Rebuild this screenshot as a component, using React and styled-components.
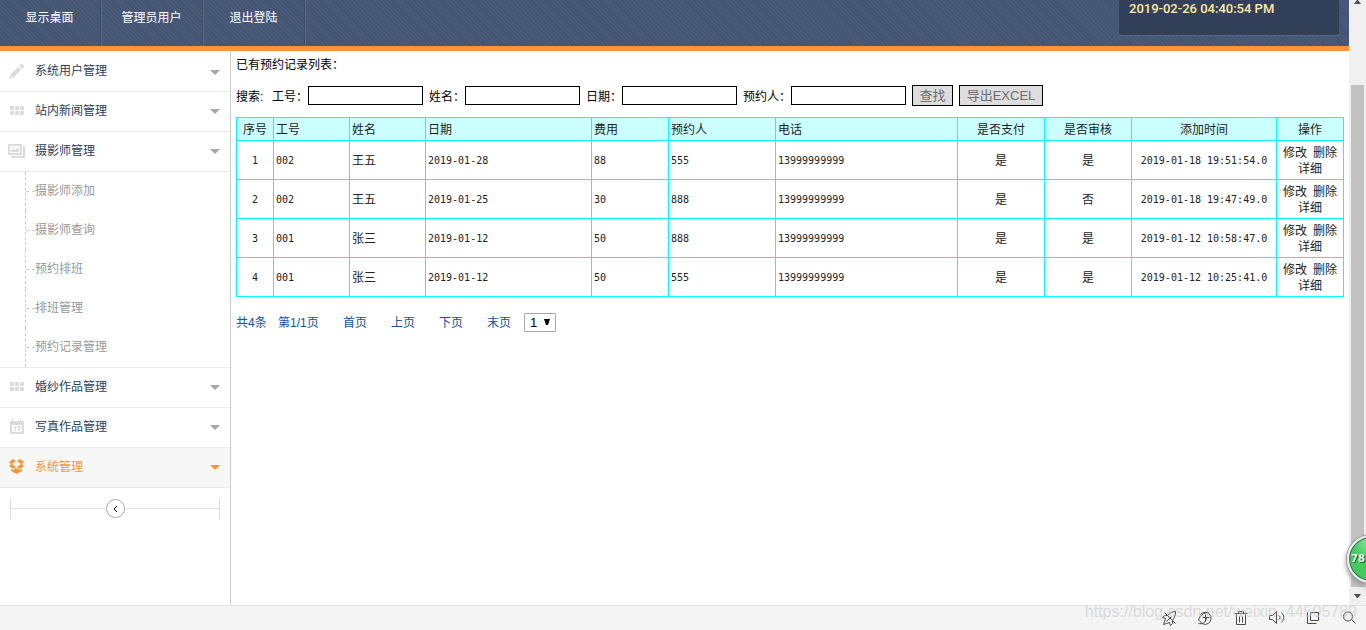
import React from "react";
import styled, { createGlobalStyle, css } from "styled-components";

const cjk = '"Noto Sans CJK SC", sans-serif';

const GlobalStyle = createGlobalStyle`
  * { box-sizing: border-box; }
  body { margin: 0; background: #fff; color: #000; font: 12px/16px "Liberation Sans", ${cjk}; }
  a { color: inherit; text-decoration: none; }
  ul { list-style: none; margin: 0; padding: 0; }
  button, input, select { font: inherit; margin: 0; }
`;

const Window = styled.div`
  display: flex;
  flex-direction: column;
  height: 100vh;
  overflow: hidden;
`;

const View = styled.div`
  flex: 1;
  min-height: 0;
  display: flex;
`;

const Page = styled.div`
  flex: 1;
  min-width: 0;
  display: flex;
  flex-direction: column;
`;

const Header = styled.header`
  flex: none;
  display: flex;
  justify-content: space-between;
  align-items: flex-start;
  padding-right: 10px;
  border-bottom: 5px solid #ff9436;
  background: repeating-linear-gradient(45deg, #43536f 0 1px, #485a78 1px 3px);
`;

const TopNav = styled.nav`
  display: flex;
`;

const TopLink = styled.a`
  width: 102px;
  height: 46px;
  padding: 10px 2px 0 0;
  border-right: 1px solid #5c6e8d;
  box-shadow: inset -1px 0 #3b4a64;
  color: #fff;
  text-align: center;
`;

const Clock = styled.time`
  width: 220px;
  height: 35px;
  margin-bottom: 11px;
  padding-left: 10px;
  border-radius: 0 0 2px 2px;
  background: #324059;
  box-shadow: 0 1px #53678a;
  color: #ffe9a6;
  font: 500 13px/17px Roboto, sans-serif;
`;

const Body = styled.div`
  flex: 1;
  min-height: 0;
  display: flex;
`;

const Sidebar = styled.aside`
  flex: none;
  width: 231px;
  border-right: 1px solid #ccc;
`;

const MenuLink = styled.a`
  display: flex;
  align-items: center;
  height: ${(p) => (p.$first ? 41 : 40)}px;
  padding: 0 10px ${(p) => (p.$first ? 0 : 2)}px 8px;
  border-bottom: 1px solid #ebebeb;
  background: ${(p) => (p.$active ? "#f7f7f7" : "#fff")};
  color: ${(p) => (p.$active ? "#ff9436" : "#2b3d5c")};

  span { flex: 1; margin-left: 10px; }
`;

const MenuIcon = styled.svg`
  flex: none;
  width: 17px;
  height: 17px;
  fill: ${(p) => (p.$active ? "#ff9436" : "#dbdbdb")};
`;

const Caret = styled.i`
  border: 5px solid transparent;
  border-top-color: ${(p) => (p.$active ? "#ff9436" : "#a6a6a6")};
  border-bottom: 0;
  margin-top: 2px;
`;

const SubMenu = styled.ul`
  padding-left: 25px;
  border-bottom: 1px solid #ebebeb;
`;

const SubItem = styled.li`
  display: flex;
  align-items: center;
  height: 39px;
  border-left: 1px dashed #ccc;
  color: #999;

  a { padding-bottom: 2px; }

  &::before {
    content: "";
    width: 9px;
    border-top: 1px dashed #ccc;
  }
`;

const Collapse = styled.div`
  display: flex;
  align-items: center;
  height: 21px;
  margin: 10px 10px 0;
  border: solid #ddd;
  border-width: 0 1px;

  &::before, &::after {
    content: "";
    flex: 1;
    border-top: 1px solid #e2e2e2;
  }
`;

const CollapseButton = styled.button`
  display: grid;
  place-items: center;
  width: 19px;
  height: 19px;
  padding: 0;
  border: 1px solid #aaa;
  border-radius: 50%;
  background: #fff;
`;

const Content = styled.main`
  flex: 1;
  min-width: 0;
  padding: 6px 5px 0;
`;

const Heading = styled.p`
  margin: 0 0 11px;
`;

const Search = styled.form`
  display: flex;
  align-items: center;
  height: 22px;
  margin-bottom: 11px;
`;

const SearchLabel = styled.span`
  width: 36px;
  padding-top: 4px;
`;

const Field = styled.label`
  display: flex;
  align-items: center;
  margin-right: 6px;

  input {
    width: 115px;
    height: 19px;
    margin-top: 1px;
    border: 1px solid #000;
    background: #fff;
  }
`;

const Caption = styled.span`
  width: ${(p) => p.$chars * 12}px;
  padding-top: 4px;
  white-space: nowrap;
`;

const ToolButton = styled.button`
  width: ${(p) => p.$width}px;
  height: 21px;
  margin-right: 6px;
  padding: 0;
  border: 1px solid #000;
  background: #ddd;
  color: #6d6d6d;
  font-size: 13px;
  line-height: 19px;
  white-space: nowrap;
`;

const Table = styled.table`
  width: 100%;
  border-collapse: collapse;
  table-layout: fixed;
  color: #222;
`;

const cell = css`
  padding: 2px 2px 0;
  border: 1px solid #0ff;
  font-weight: 400;
  text-align: ${(p) => (p.$center ? "center" : "left")};
`;

const Th = styled.th`
  ${cell}
  height: 23px;
  background: #cff;
`;

const Td = styled.td`
  ${cell}
  height: 39px;
  ${(p) => p.$mono && css`font: 10px/16px "DejaVu Sans Mono", monospace; white-space: nowrap;`}
`;

const Actions = styled.div`
  display: flex;
  flex-wrap: wrap;
  justify-content: center;
  column-gap: 6px;
`;

const Pager = styled.nav`
  display: flex;
  align-items: center;
  height: 20px;
  margin-top: 15px;
  color: #0d4fb3;

  a { margin-right: 24px; padding-top: 2px; }
  a:last-of-type { margin-right: 13px; }
`;

const Total = styled.span`
  width: ${(p) => p.$width}px;
  padding-top: 2px;
  white-space: nowrap;
`;

const SelectBox = styled.div`
  display: grid;
  align-items: center;

  svg { grid-area: 1 / 1; justify-self: end; margin-right: 6px; pointer-events: none; }
`;

const PageSelect = styled.select`
  grid-area: 1 / 1;
  appearance: none;
  width: 32px;
  height: 19px;
  padding: 0 0 0 5px;
  border: 1px solid #a9a9a9;
  border-radius: 1px;
  background: #fff;
  color: #000;
  font-size: 13px;
  line-height: 17px;
`;

const ScrollBar = styled.div`
  flex: none;
  display: flex;
  flex-direction: column;
  align-items: center;
  width: 17px;
  background: #f0f0f0;
`;

const Arrow = styled.svg`
  flex: none;
  width: 7px;
  height: 4px;
  margin: ${(p) => (p.$up ? "0 0 81px" : "7px")};
  fill: #505050;
`;

const Thumb = styled.div`
  flex: 1;
  width: 13px;
  background: #c1c1c1;
`;

const Status = styled.footer`
  position: relative;
  flex: none;
  display: flex;
  justify-content: flex-end;
  align-items: center;
  gap: 20px;
  height: 25px;
  padding-right: 9px;
  border-top: 1px solid #e5e5e5;
  background: #f4f4f4;

  svg { width: 16px; height: 16px; fill: none; stroke: #4a4a4a; stroke-width: 1; }
`;

const Watermark = styled.span`
  position: absolute;
  right: 9px;
  bottom: 9px;
  color: rgba(200, 200, 200, 0.6);
  font-size: 16px;
  line-height: 18px;
`;

const BadgeLayer = styled.div`
  position: fixed;
  inset: 0;
  overflow: hidden;
  pointer-events: none;
`;

const Badge = styled.div`
  position: absolute;
  right: -29px;
  bottom: 47px;
  width: 48px;
  height: 48px;
  padding-left: 2px;
  border: 2px solid #eee;
  border-radius: 50%;
  background: radial-gradient(circle at 50% 10%, #8be79a, #43c95c 45%);
  box-shadow: 0 0 0 1px #999, inset 0 0 0 1px #197a4e, 0 3px 5px 1px #999;
  color: #fff;
  font: 700 10px/44px "DejaVu Sans", sans-serif;
  text-shadow: 1px 1px #176a34;
`;

const icons = {
  pencil: <><path d="M1 16l1-4 8-8 3 3-8 8z" /><path d="M11 3l1-1 1-1h1l2 2v1l-2 2z" /><path d="M2 12l3 3" stroke="#fff" /></>,
  grid: <>{[4, 9].map((y) => [2, 7, 12].map((x) => <rect key={`${x}-${y}`} x={x} y={y} width="4" height="4" rx="1" />))}</>,
  image: <><path fillRule="evenodd" d="M0 2h14v11H0zM2 4v7h10V4z" /><path d="M3 10V8l2-1 2 1 3-2 1 1v3zM4 5h2v1H4zM15 4h2v12H3v-2h12z" /></>,
  calendar: <><path fillRule="evenodd" d="M2 3h2V1h1v2h7V1h1v2h3v13H2zM4 7v7h10V7z" /><path d="M6 9l2-1v5H7v-3H6zM9 8h4v1l-2 4h-1l1-4H9z" /></>,
  box: (
    <path d="M5 1l3 2-4 3 4 3-3 2-4-3 2-2-2-2zM12 1l4 3-2 2 2 2-4 3-3-2 4-3-4-3zM3 11l2 1 3-2 .5 1 .5-1 3 2 2-1v2l-5.500 3L3 13z" />
  ),
};

const menus = [
  { icon: "pencil", text: "系统用户管理" },
  { icon: "grid", text: "站内新闻管理" },
  { icon: "image", text: "摄影师管理", children: ["摄影师添加", "摄影师查询", "预约排班", "排班管理", "预约记录管理"] },
  { icon: "grid", text: "婚纱作品管理" },
  { icon: "calendar", text: "写真作品管理" },
  { icon: "box", text: "系统管理", active: true },
];

// title, width, centred, monospaced body text
const columns = [
  ["序号", 37, true, true], ["工号", 76, false, true], ["姓名", 76], ["日期", 166, false, true],
  ["费用", 77, false, true], ["预约人", 107, false, true], ["电话", 182, false, true],
  ["是否支付", 87, true], ["是否审核", 87, true], ["添加时间", 145, true, true], ["操作", 67, true],
];

const rows = [
  ["1", "002", "王五", "2019-01-28", "88", "555", "13999999999", "是", "是", "2019-01-18 19:51:54.0"],
  ["2", "002", "王五", "2019-01-25", "30", "888", "13999999999", "是", "否", "2019-01-18 19:47:49.0"],
  ["3", "001", "张三", "2019-01-12", "50", "888", "13999999999", "是", "是", "2019-01-12 10:58:47.0"],
  ["4", "001", "张三", "2019-01-12", "50", "555", "13999999999", "是", "是", "2019-01-12 10:25:41.0"],
];

const tools = [
  <path d="M14 1c-3 0-5 1-8 4L3 5 1 7l3 1-1 3-1 3 3-1 3-1 1 3 2-2V10c2-3 3-5 3-9zM3 2l11 11M5 11l5-5" />,
  <><path d="M3 4a6 6 0 1 1-1 6M1 10c1-5 5-8 10-8M1 13c4 1 7-1 8-5" /><path d="M5 7h7M8 4v7" /></>,
  <path d="M1 3h13M5 3V1h5v2M3 3v11h9V3M6 6v6M9 6v6" />,
  <path d="M0 5h3l4-4v12l-4-4H0zM0 5v4M9 5c2 1 2 3 0 4M12 2c3 3 3 7 0 10" />,
  <path d="M5 2h8v8H5zM2 5v8h9M2 2v3" />,
  <path d="M11 6A4 4 0 1 1 2 6a4 4 0 0 1 9 0zM10 9l4 4" />,
];

export default function App() {
  return (
    <Window>
      <GlobalStyle />
      <View>
        <Page>
          <Header>
            <TopNav>
              {["显示桌面", "管理员用户", "退出登陆"].map((t) => <TopLink href="#" key={t}>{t}</TopLink>)}
            </TopNav>
            <Clock>2019-02-26 04:40:54 PM</Clock>
          </Header>
          <Body>
            <Sidebar>
              {menus.map((m, i) => (
                <React.Fragment key={m.text}>
                  <MenuLink href="#" $active={m.active} $first={i === 0}>
                    <MenuIcon viewBox="0 0 17 17" $active={m.active}>{icons[m.icon]}</MenuIcon>
                    <span>{m.text}</span>
                    <Caret $active={m.active} />
                  </MenuLink>
                  {m.children && (
                    <SubMenu>
                      {m.children.map((c) => <SubItem key={c}><a href="#">{c}</a></SubItem>)}
                    </SubMenu>
                  )}
                </React.Fragment>
              ))}
              <Collapse>
                <CollapseButton type="button" aria-label="收起菜单">
                  <svg width="5" height="8" fill="none" stroke="#000"><path d="M4 1L1 4l3 3" /></svg>
                </CollapseButton>
              </Collapse>
            </Sidebar>
            <Content>
              <Heading>已有预约记录列表：</Heading>
              <Search>
                <SearchLabel>搜索:</SearchLabel>
                {["工号", "姓名", "日期", "预约人"].map((t) => (
                  <Field key={t}><Caption $chars={t.length + 1}>{t}：</Caption><input type="text" /></Field>
                ))}
                <ToolButton type="button" $width={41}>查找</ToolButton>
                <ToolButton type="button" $width={84}>导出EXCEL</ToolButton>
              </Search>
              <Table>
                <colgroup>{columns.map(([t, w]) => <col key={t} width={w} />)}</colgroup>
                <thead>
                  <tr>{columns.map(([t, , center]) => <Th key={t} $center={center}>{t}</Th>)}</tr>
                </thead>
                <tbody>
                  {rows.map((r) => (
                    <tr key={r[0]}>
                      {r.map((v, i) => <Td key={i} $center={columns[i][2]} $mono={columns[i][3]}>{v}</Td>)}
                      <Td $center>
                        <Actions><a href="#">修改</a><a href="#">删除</a><a href="#">详细</a></Actions>
                      </Td>
                    </tr>
                  ))}
                </tbody>
              </Table>
              <Pager>
                <Total $width={42}>共4条</Total>
                <Total $width={65}>第1/1页</Total>
                {["首页", "上页", "下页", "末页"].map((t) => <a href="#" key={t}>{t}</a>)}
                <SelectBox>
                  <PageSelect aria-label="页码"><option>1</option></PageSelect>
                  <svg width="6" height="6"><path d="M0 0h6L4 6H2z" /></svg>
                </SelectBox>
              </Pager>
            </Content>
          </Body>
        </Page>
        <ScrollBar>
          <Arrow $up viewBox="0 0 7 4"><path d="M0 4h7L4 0H3z" /></Arrow>
          <Thumb />
          <Arrow viewBox="0 0 7 4"><path d="M0 0h7L4 4H3z" /></Arrow>
        </ScrollBar>
      </View>
      <Status>
        {tools.map((t, i) => <svg key={i} viewBox="-0.5 -0.5 16 16">{t}</svg>)}
        <Watermark>https://blog.csdn.net/weixin_44505789</Watermark>
      </Status>
      <BadgeLayer><Badge>78</Badge></BadgeLayer>
    </Window>
  );
}
